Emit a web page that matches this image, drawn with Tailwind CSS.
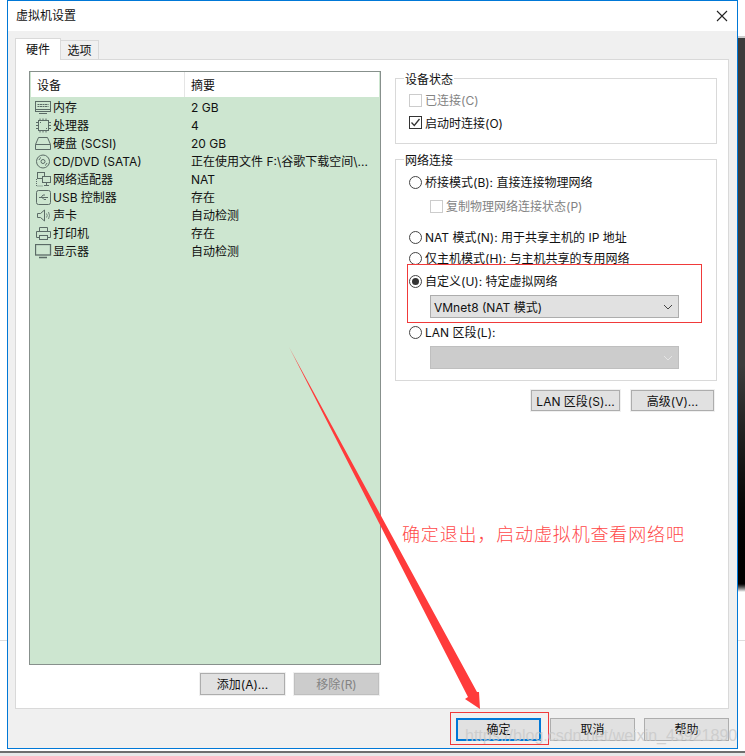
<!DOCTYPE html>
<html><head><meta charset="utf-8"><script src="https://cdn.jsdelivr.net/npm/@tailwindcss/browser@4"></script></head>
<body class="m-0 bg-white">
<div class="relative w-[745px] h-[756px] overflow-hidden bg-white text-[12px] leading-[18px] text-[#111] font-['Inter','Noto_Sans_CJK_SC',sans-serif]">
  <!-- backdrop behind the window -->
  <div class="absolute left-[738px] top-[36px] w-[7px] h-[2px] bg-[#ccc]"></div>
  <div class="absolute left-[738px] top-[38px] w-[7px] h-[545px] bg-linear-to-b from-[#3c3c3c] from-60% to-black"></div>
  <div class="absolute left-[738px] top-[583px] w-[7px] h-[9px] bg-linear-to-b from-black to-white"></div>
  <div class="absolute left-0 top-[640px] w-[745px] h-px bg-[#ddd]"></div>
  <div class="absolute left-0 top-[751px] w-[745px] h-[2px] bg-[#6e6e6e]"></div>
  <div class="absolute left-0 top-[753px] w-[745px] h-[3px] bg-[#e8e8e8]"></div>

  <!-- window -->
  <div class="absolute left-[7px] top-0 w-[731px] h-[749px] border border-[#0078d7] bg-[#f0f0f0] flex flex-col">
    <div class="h-[30px] shrink-0 bg-white flex items-center justify-between pl-[8px] pr-[8px]">
      <span>虚拟机设置</span>
      <svg class="w-[12px] h-[12px] mr-[1px]" viewBox="0 0 12 12"><path d="M1 1 L11 11 M11 1 L1 11" stroke="#222" stroke-width="1.1" fill="none"/></svg>
    </div>
    <div class="flex-1 flex flex-col pl-[7px] pr-[8px] pt-[7px]">
      <!-- tabs -->
      <div class="flex h-[21px] items-end relative z-10 shrink-0">
        <div class="w-[46px] h-[22px] mb-[-1px] bg-white border border-b-0 border-[#d9d9d9] flex items-center justify-center">硬件</div>
        <div class="w-[38px] h-[19px] pt-[2px] bg-[#f0f0f0] border border-b-0 border-l-0 border-[#d9d9d9] flex items-center justify-center">选项</div>
      </div>
      <!-- panel -->
      <div class="flex-1 bg-white border border-[#d9d9d9] flex pl-[13px] pt-[11px] gap-[14px]">
        <!-- left column -->
        <div class="w-[352px] shrink-0 flex flex-col">
          <div class="h-[594px] border border-[#87908c] bg-[#cde6d0] flex flex-col">
            <div class="h-[25px] mx-px mt-0 bg-white flex items-center shrink-0">
              <div class="w-[154px] pl-[6px] pt-[2px] h-full flex items-center border-r border-[#e5e5e5]">设备</div>
              <div class="pl-[6px] pt-[2px]">摘要</div>
            </div>
            <div class="flex flex-col pt-px pl-[5px] [&_span]:translate-y-px">
              <div class="flex h-[18px] items-center"><div class="w-[156px] flex items-center gap-px"><svg class="w-[17px] h-[15px]" viewBox="0 0 17 15" fill="none" stroke="#5b6b66"><rect x=".5" y="1.500" width="15" height="10"/><path d="M2.500 4.500h11M2.500 6.500h11" stroke-dasharray="2 .5"/><path d="M1 9.500h14M4 13.500h8"/></svg><span>内存</span></div><span>2 GB</span></div>
              <div class="flex h-[18px] items-center"><div class="w-[156px] flex items-center gap-px"><svg class="w-[17px] h-[15px]" viewBox="0 0 17 15" fill="none" stroke="#5b6b66"><rect x="3.500" y="2.500" width="10" height="10"/><path d="M5 4.500h1M11 10.500h1M5 .5v2M8 .5v2M11 .5v2M5 12.500v2M8 12.500v2M11 12.500v2M1 4.500h2M1 7.500h2M1 10.500h2M14 4.500h2M14 7.500h2M14 10.500h2"/></svg><span>处理器</span></div><span>4</span></div>
              <div class="flex h-[18px] items-center"><div class="w-[156px] flex items-center gap-px"><svg class="w-[17px] h-[15px]" viewBox="0 0 17 15" fill="none" stroke="#5b6b66"><path d="M.5 8.500 L3.500 1.500 H12.500 L15.500 8.500 V13.500 H.5 Z M.5 8.500 H15.500"/></svg><span>硬盘 (SCSI)</span></div><span>20 GB</span></div>
              <div class="flex h-[18px] items-center"><div class="w-[156px] flex items-center gap-px"><svg class="w-[17px] h-[15px]" viewBox="0 0 17 15" fill="none" stroke="#5b6b66"><circle cx="8" cy="7.500" r="6.500"/><circle cx="8" cy="7.500" r="2"/><path d="M4 6a4.500 4.500 0 0 1 2-2.500M12 9a4.500 4.500 0 0 1-2 2.500"/></svg><span>CD/DVD (SATA)</span></div><span>正在使用文件 F:\谷歌下载空间\...</span></div>
              <div class="flex h-[18px] items-center"><div class="w-[156px] flex items-center gap-px"><svg class="w-[17px] h-[15px]" viewBox="0 0 17 15" fill="none" stroke="#5b6b66"><rect x="2.500" y=".5" width="7" height="6"/><rect x="7.500" y="4.500" width="8" height="6" fill="#cde6d0"/><path d="M11.500 10.500v3M9 13.500h5"/><path d="M1.500 7v7h6" stroke-dasharray="1 1"/></svg><span>网络适配器</span></div><span>NAT</span></div>
              <div class="flex h-[18px] items-center"><div class="w-[156px] flex items-center gap-px"><svg class="w-[17px] h-[15px]" viewBox="0 0 17 15" fill="none" stroke="#5b6b66"><rect x="1.500" y=".5" width="14" height="14" rx="2"/><path d="M4 7.500h9M6 7.500l2-2.500h2M7 7.500l2 2h2"/></svg><span>USB 控制器</span></div><span>存在</span></div>
              <div class="flex h-[18px] items-center"><div class="w-[156px] flex items-center gap-px"><svg class="w-[17px] h-[15px]" viewBox="0 0 17 15" fill="none" stroke="#5b6b66"><path d="M2.500 5.500h3l4-3.500v11l-4-3.500h-3z"/><path d="M11.500 5.500q1.500 2 0 4M13.500 4q2 3.500 0 7" stroke-width=".8"/></svg><span>声卡</span></div><span>自动检测</span></div>
              <div class="flex h-[18px] items-center"><div class="w-[156px] flex items-center gap-px"><svg class="w-[17px] h-[15px]" viewBox="0 0 17 15" fill="none" stroke="#5b6b66"><path d="M4.500 5.500v-4h8v4M4.500 11.500h-3v-6h14v6h-3"/><rect x="4.500" y="9.500" width="8" height="4"/></svg><span>打印机</span></div><span>存在</span></div>
              <div class="flex h-[18px] items-center"><div class="w-[156px] flex items-center gap-px"><svg class="w-[17px] h-[15px]" viewBox="0 0 17 15" fill="none" stroke="#5b6b66"><rect x=".5" y=".5" width="15" height="10.500" stroke-width="1.300"/><path d="M4 13.500h8" stroke-width="1.500"/></svg><span>显示器</span></div><span>自动检测</span></div>
            </div>
          </div>
          <div class="flex justify-end gap-[9px] mt-[8px] pr-[2px]">
            <button class="w-[85px] h-[22px] pt-[2px] leading-[18px] bg-[#e1e1e1] border border-[#adadad] ring-1 ring-[#f0f0f0] text-[#111]">添加(A)...</button>
            <button class="w-[85px] h-[22px] pt-[2px] leading-[18px] bg-[#ccc] border border-[#bfbfbf] ring-1 ring-[#f0f0f0] text-[#838383]">移除(R)</button>
          </div>
        </div>
        <!-- right column -->
        <div class="w-[322px] shrink-0 flex flex-col mt-[-2px]">
          <fieldset class="border border-[#d9d9d9] h-[75px] flex flex-col">
            <legend class="ml-[8px] px-px leading-[18px]"><span class="block translate-y-[2px]">设备状态</span></legend>
            <label class="flex items-center h-[18px] mt-[3px] pl-[13px] gap-[3px] text-[#838383] translate-y-px"><span class="w-[13px] h-[13px] border border-[#ccc] bg-white"></span><span class="translate-y-px">已连接(C)</span></label>
            <label class="flex items-center h-[18px] mt-[4px] pl-[13px] gap-[3px] translate-y-px"><span class="w-[13px] h-[13px] border border-[#333] bg-white flex items-center justify-center"><svg class="w-[11px] h-[11px]" viewBox="0 0 11 11"><path d="M1.500 5.500 L4.300 8.500 L9.500 2" stroke="#333" stroke-width="1.300" fill="none"/></svg></span><span class="translate-y-[2px]">启动时连接(O)</span></label>
          </fieldset>
          <fieldset class="border border-[#d9d9d9] mt-[6px] h-[231px] flex flex-col">
            <legend class="ml-[8px] px-px leading-[18px]"><span class="block translate-y-[2px]">网络连接</span></legend>
            <label class="flex items-center h-[18px] mt-[4px] pl-[13px] gap-[3px] translate-y-px"><span class="w-[13px] h-[13px] rounded-full border border-[#444] bg-white"></span><span class="translate-y-px">桥接模式(B): 直接连接物理网络</span></label>
            <label class="flex items-center h-[18px] mt-[6px] pl-[34px] gap-[3px] text-[#838383] translate-y-px"><span class="w-[13px] h-[13px] border border-[#ccc] bg-white"></span><span class="translate-y-px">复制物理网络连接状态(P)</span></label>
            <label class="flex items-center h-[18px] mt-[13px] pl-[13px] gap-[3px] translate-y-px"><span class="w-[13px] h-[13px] rounded-full border border-[#444] bg-white"></span><span class="translate-y-px">NAT 模式(N): 用于共享主机的 IP 地址</span></label>
            <label class="flex items-center h-[18px] mt-[3px] pl-[13px] gap-[3px] translate-y-px"><span class="w-[13px] h-[13px] rounded-full border border-[#444] bg-white"></span><span class="translate-y-px">仅主机模式(H): 与主机共享的专用网络</span></label>
            <label class="flex items-center h-[18px] mt-[5px] pl-[13px] gap-[3px] translate-y-px"><span class="w-[13px] h-[13px] rounded-full border border-[#444] bg-white flex items-center justify-center"><span class="w-[7px] h-[7px] rounded-full bg-[#333]"></span></span><span class="translate-y-px">自定义(U): 特定虚拟网络</span></label>
            <div class="mt-[6px] ml-[34px] w-[249px] h-[23px] bg-[#e1e1e1] border border-[#adadad] flex items-center justify-between pl-[3px] pr-[5px]">
              <span class="translate-y-px">VMnet8 (NAT 模式)</span>
              <svg class="w-[10px] h-[6px]" viewBox="0 0 10 6"><path d="M1 1 L5 5 L9 1" stroke="#444" fill="none"/></svg>
            </div>
            <label class="flex items-center h-[18px] mt-[4px] pl-[13px] gap-[3px] translate-y-px"><span class="w-[13px] h-[13px] rounded-full border border-[#444] bg-white"></span><span class="translate-y-px">LAN 区段(L):</span></label>
            <div class="mt-[6px] ml-[34px] w-[249px] h-[23px] bg-[#ccc] border border-[#bfbfbf] flex items-center justify-end pr-[5px]">
              <svg class="w-[10px] h-[6px]" viewBox="0 0 10 6"><path d="M1 1 L5 5 L9 1" stroke="#e4e4e4" fill="none"/></svg>
            </div>
          </fieldset>
          <div class="flex justify-end gap-[11px] mt-[9px] pr-[3px]">
            <button class="w-[89px] h-[21px] pt-[2px] leading-[18px] bg-[#e1e1e1] border border-[#adadad] ring-1 ring-[#f0f0f0] text-[#111]">LAN 区段(S)...</button>
            <button class="w-[83px] h-[21px] pt-[2px] leading-[18px] bg-[#e1e1e1] border border-[#adadad] ring-1 ring-[#f0f0f0] text-[#111]">高级(V)...</button>
          </div>
        </div>
      </div>
    </div>
    <!-- footer -->
    <div class="h-[39px] shrink-0 flex justify-end gap-[9px] pt-[9px] pr-[8px]">
      <button class="w-[85px] h-[23px] pt-[1px] leading-[18px] bg-[#e1e1e1] border-2 border-[#0078d7] text-[#111]">确定</button>
      <button class="w-[85px] h-[23px] pt-[1px] leading-[18px] bg-[#e1e1e1] border border-[#adadad] text-[#111]">取消</button>
      <button class="w-[85px] h-[23px] pt-[1px] leading-[18px] bg-[#e1e1e1] border border-[#adadad] text-[#111]">帮助</button>
    </div>
  </div>

  <!-- annotations -->
  <div class="absolute left-[407px] top-[264px] w-[295px] h-[59px] border border-[#f03a3a]"></div>
  <div class="absolute left-[450px] top-[712px] w-[99px] h-[33px] border border-[#f03a3a]"></div>
  <svg class="absolute left-0 top-0 w-[745px] h-[756px]" viewBox="0 0 745 756"><polygon points="289,347 477,692 479,692 480,709 465,699 468,697" fill="#ff3b3b"/></svg>
  <div class="absolute left-[402px] top-[522px] text-[18px] leading-[26px] tracking-[.85px] font-light text-[#ff4a4a] whitespace-nowrap">确定退出，启动虚拟机查看网络吧</div>
  <div class="absolute left-[465px] top-[726px] text-[16px] leading-[20px] text-[#c8c8c8]/80 font-['Liberation_Sans',sans-serif] whitespace-nowrap">https://blog.csdn.net/weixin_43921890</div>
</div>
</body></html>
